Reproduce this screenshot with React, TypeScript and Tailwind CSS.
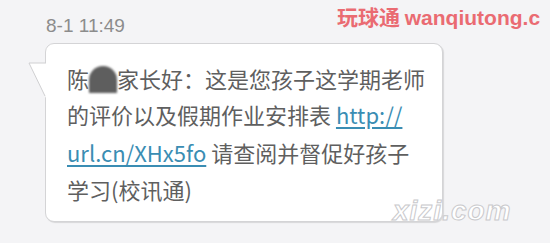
export default function App() {
  return (
    <div className="relative w-[550px] h-[243px] overflow-hidden bg-[#f4f4f6] font-['Noto_Sans_CJK_SC','Noto_Sans',sans-serif]">
      <div className="pl-[46px] pt-[13px]">
        {/* Timestamp */}
        <div className="h-[30px] text-[19px] leading-[26px] text-[#8c8c8c] font-['Liberation_Sans',sans-serif]">
          8-1 11:49
        </div>

        {/* Bubble */}
        <div className="relative w-[398px] -ml-[1px] rounded-[9px] border border-[#d4d4d6] bg-white shadow-[1px_1px_1px_rgba(0,0,0,0.12)] pl-[21px] pr-2 pt-[16px] pb-[14px]">
          <svg
            className="absolute left-[-18px] top-[18px]"
            width="19"
            height="40"
            viewBox="0 0 19 40"
          >
            <path d="M19 1 L1 1 L18 36 L19 36 Z" fill="#ffffff" />
            <path d="M18 1 L1 1 L17 34" fill="none" stroke="#d0d0d2" strokeWidth="1" />
          </svg>
          <div className="text-[22px] text-[#5f5f5f] whitespace-nowrap">
            <div className="h-[36px] leading-[36px] flex items-center">
              陈
              <span className="inline-block w-[28px] h-[27px] mt-[2px] rounded-t-full rounded-b-[9px] bg-[#5e5e5e] blur-[1px]" />
              家长好：这是您孩子这学期老师
            </div>
            <div className="h-[37px] leading-[37px]">
              的评价以及假期作业安排表{" "}
              <span className="text-[#3a8db3] underline underline-offset-[3px]">http://</span>
            </div>
            <div className="h-[38px] leading-[38px]">
              <span className="text-[#3a8db3] underline underline-offset-[3px]">url.cn/XHx5fo</span>{" "}
              请查阅并督促好孩子
            </div>
            <div className="h-[36px] leading-[36px]">学习(校讯通)</div>
          </div>
        </div>
      </div>

      {/* Watermarks */}
      <div className="absolute left-[337px] top-[3px] whitespace-nowrap text-[21px] leading-[26px] font-bold text-[#ea6b72]">
        玩球通 <span className="font-['Liberation_Sans',sans-serif]">wanqiutong.c</span>
      </div>
      <div className="absolute left-[393px] top-[195px] text-[28px] leading-[32px] font-bold italic tracking-[1px] text-white font-['Liberation_Sans',sans-serif] [-webkit-text-stroke:1px_#c9c9cc]">
        xizi.com
      </div>
    </div>
  );
}
